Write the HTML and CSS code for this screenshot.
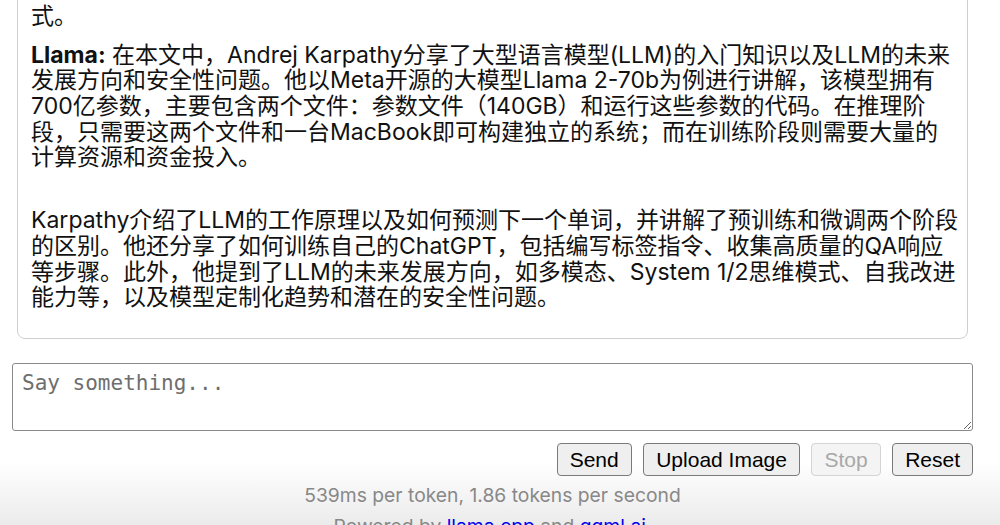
FILE: index.html
```html
<!DOCTYPE html>
<html lang="zh">
<head>
<meta charset="utf-8">
<title>llama.cpp - chat</title>
<link rel="stylesheet" href="styles.css">
</head>
<body>
<div class="page">
  <main class="chat">
    <div class="msg">
      <p>式。</p>
    </div>
    <div class="msg">
      <p><strong>Llama:</strong> 在本文中，Andrej Karpathy分享了大型语言模型(LLM)的入门知识以及LLM的未来<br>发展方向和安全性问题。他以Meta开源的大模型Llama 2-70b为例进行讲解，该模型拥有<br>700亿参数，主要包含两个文件：参数文件（140GB）和运行这些参数的代码。在推理阶<br>段，只需要这两个文件和一台MacBook即可构建独立的系统；而在训练阶段则需要大量的<br>计算资源和资金投入。</p>
      <p>Karpathy介绍了LLM的工作原理以及如何预测下一个单词，并讲解了预训练和微调两个阶段<br>的区别。他还分享了如何训练自己的ChatGPT，包括编写标签指令、收集高质量的QA响应<br>等步骤。此外，他提到了LLM的未来发展方向，如多模态、System 1/2思维模式、自我改进<br>能力等，以及模型定制化趋势和潜在的安全性问题。</p>
    </div>
  </main>
  <form class="write">
    <textarea class="prompt" placeholder="Say something..."></textarea>
    <div class="actions">
      <button type="button" class="btn">Send</button>
      <button type="button" class="btn">Upload Image</button>
      <button type="button" class="btn" disabled>Stop</button>
      <button type="button" class="btn">Reset</button>
    </div>
  </form>
  <footer class="foot">
    <p class="stats">539ms per token, 1.86 tokens per second</p>
    <p class="powered">Powered by <a href="#">llama.cpp</a> and <a href="#">ggml.ai</a>.</p>
  </footer>
</div>
</body>
</html>
```
FILE: styles.css
```css
html {
  height: 100%;
  background: linear-gradient(to bottom, #ffffff 0%, #ffffff 88%, #ebebeb 100%);
}

body {
  margin: 0;
  height: 100%;
  overflow: hidden;
  font-family: Inter, "Noto Sans CJK SC", sans-serif;
  color: #111;
}

.page {
  box-sizing: border-box;
  height: calc(100% + 20px);
  display: flex;
  flex-direction: column;
  justify-content: flex-end;
  padding: 0 27px 0 12px;
}

.chat {
  flex-shrink: 0;
  margin: 0 5px;
  padding: 40px 13px 27px;
  border: 1px solid #cfcfcf;
  border-radius: 8px;
  font-size: 23px;
  line-height: 25.7px;
}

.msg p {
  margin: 0;
  white-space: nowrap;
}

.msg + .msg {
  margin-top: 13px;
}

.msg p + p {
  margin-top: 37px;
}

.write {
  margin: 24px 0 0;
  display: flex;
  flex-direction: column;
}

.prompt {
  display: block;
  box-sizing: border-box;
  width: 100%;
  height: 68px;
  margin: 0;
  padding: 7px 9px;
  border: 1px solid #8a8a8a;
  border-radius: 3px;
  font-family: "DejaVu Sans Mono", monospace;
  font-size: 21px;
  background: #fff;
}

.prompt::placeholder {
  color: #6e6e6e;
}

.actions {
  display: flex;
  justify-content: flex-end;
  gap: 11.5px;
  margin-top: 12px;
}

.btn {
  box-sizing: border-box;
  height: 33px;
  margin: 0;
  padding: 0 12px;
  border: 1px solid #7a7a7a;
  border-radius: 4px;
  background: #efefef;
  color: #000;
  font-family: "Liberation Sans", Arial, sans-serif;
  font-size: 21px;
  line-height: 31px;
}

.btn:disabled {
  color: #a8a8a8;
  border-color: #d4d4d4;
  background: #f4f4f4;
}

.foot {
  text-align: center;
  color: #888;
  font-size: 19.3px;
  line-height: 23px;
}

.foot p {
  margin: 0;
}

.foot .stats {
  margin-top: 8px;
}

.foot .powered {
  margin-top: 7.5px;
  margin-bottom: 7.5px;
}

.powered a {
  color: #0000ee;
}
```
